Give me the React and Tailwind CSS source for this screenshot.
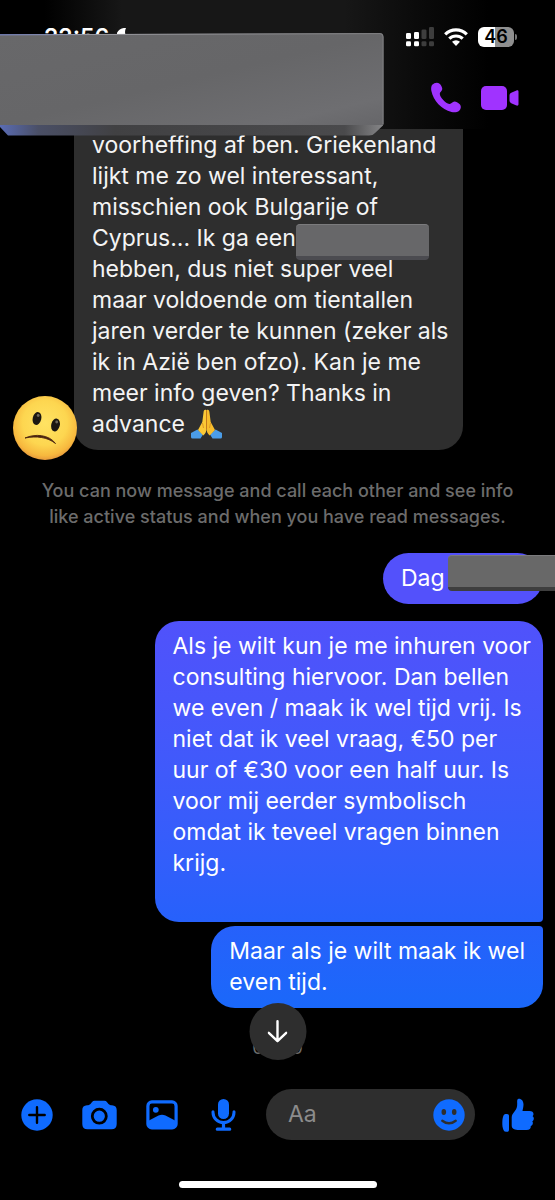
import React from "react";

function HeaderBlock() {
  return (
    <svg viewBox="0 0 384 103" className="pointer-events-none absolute left-0 top-[33px] w-[384px]" aria-hidden="true">
      <defs>
        <linearGradient id="face" x1="0" y1="0" x2="1" y2="1">
          <stop offset="0" stopColor="#68686a" />
          <stop offset="0.5" stopColor="#666668" />
          <stop offset="0.85" stopColor="#6e6e71" />
          <stop offset="1" stopColor="#666669" />
        </linearGradient>
        <linearGradient id="bevel" x1="0" y1="0" x2="1" y2="0">
          <stop offset="0" stopColor="#5a6cb4" />
          <stop offset="0.1" stopColor="#4a4f66" />
          <stop offset="0.3" stopColor="#414143" />
          <stop offset="0.9" stopColor="#4a4a4c" />
          <stop offset="1" stopColor="#858587" />
        </linearGradient>
        <linearGradient id="edge" x1="0" y1="0" x2="1" y2="0">
          <stop offset="0" stopColor="#7f8fd6" />
          <stop offset="0.25" stopColor="#99999f" />
          <stop offset="1" stopColor="#7e7e80" />
        </linearGradient>
      </defs>
      <path d="M0 92H383V92.500L375 100Q373 102.500 369 102.500H8L0 94Z" fill="url(#bevel)" />
      <path d="M0 1.500L380 0Q383.500 0 383.500 4V92H0Z" fill="url(#face)" />
      <path d="M0 1.800L380 0.600Q383 0.600 383 4V91" fill="none" stroke="url(#edge)" />
    </svg>
  );
}

function Signal() {
  return (
    <svg viewBox="0 0 28 20" className="w-[28px]" aria-label="Signal">
      <g fill="#fff">
        <rect x="0" y="6" width="5" height="6" rx="1.300" />
        <rect x="8" y="5" width="5" height="7" rx="1.300" />
        <rect x="0" y="14.300" width="5" height="5" rx="1.300" />
        <rect x="8" y="14.300" width="5" height="5" rx="1.300" />
      </g>
      <g fill="#3d3d3d">
        <rect x="15.500" y="2.500" width="5" height="9.500" rx="1.300" />
        <rect x="23" y="0" width="5" height="12" rx="1.300" />
        <rect x="15.500" y="14.300" width="5" height="5" rx="1.300" />
        <rect x="23" y="14.300" width="5" height="5" rx="1.300" />
      </g>
    </svg>
  );
}

function Wifi() {
  return (
    <svg viewBox="0 0 24 18" className="w-[24px]" aria-label="Wi-Fi">
      <g fill="none" stroke="#fff" strokeWidth="3.200">
        <path d="M1.200 6.300A15.500 15.500 0 0 1 22.800 6.300" />
        <path d="M5.300 10.700A9.700 9.700 0 0 1 18.700 10.700" />
      </g>
      <path d="M12 18L8 13.800A5.800 5.800 0 0 1 16 13.800Z" fill="#fff" />
    </svg>
  );
}

function Battery() {
  return (
    <div className="flex items-center gap-px" aria-label="Battery 46 percent">
      <span className="flex h-5 w-9 items-center justify-center rounded-md bg-linear-to-r from-white from-46% to-[#8f8f8f] to-46% text-lg font-semibold text-black">
        46
      </span>
      <span className="h-1.5 w-0.5 rounded-r bg-[#777777]" />
    </div>
  );
}

function PhoneIcon() {
  return (
    <svg viewBox="0 0 30 31" className="w-[30px]" aria-hidden="true">
      <path
        d="M1.500 2.600C3 .9 6.300-.3 8.600 1.700C10 3 11.300 5.200 11.300 7C11.300 9.200 8.600 9.800 8.800 12C9.100 15.400 14.600 21.500 18.300 22C20.600 22.200 21.200 19.500 23.400 19.500C25.300 19.500 27.800 21.100 29 22.600C30.500 24.600 29.800 27.500 28 29C26.300 30.300 23.500 30.700 20.500 30C10.500 27.500 2.300 18.500.4 9C-.1 6.500.1 4.200 1.500 2.600Z"
        fill="#a033ff"
      />
    </svg>
  );
}

function VideoIcon() {
  return (
    <svg viewBox="0 0 38 24" className="w-[38px]" aria-hidden="true">
      <rect width="26" height="24" rx="5" fill="#a033ff" />
      <path d="M28.500 9.500C28.500 8 29.500 7.200 30.800 6.600L35.500 4.400C36.600 4 37.500 4.500 37.500 5.700V18.300C37.500 19.500 36.600 20 35.500 19.600L30.800 17.400C29.500 16.800 28.500 16 28.500 14.500Z" fill="#a033ff" />
    </svg>
  );
}

function Avatar() {
  return (
    <svg viewBox="0 0 64 64" className="absolute -bottom-2.5 left-[13px] w-[64px]" role="img" aria-label="Confused face">
      <defs>
        <radialGradient id="skin" cx="0.5" cy="0.42" r="0.58">
          <stop offset="0" stopColor="#ffe363" />
          <stop offset="0.6" stopColor="#fdd650" />
          <stop offset="0.88" stopColor="#f7b83e" />
          <stop offset="1" stopColor="#e79a3c" />
        </radialGradient>
      </defs>
      <circle cx="32" cy="32" r="32" fill="url(#skin)" />
      <ellipse cx="24" cy="22.500" rx="4.300" ry="6.500" transform="rotate(14 24 22.500)" fill="#1c1712" />
      <ellipse cx="42.500" cy="29" rx="4.300" ry="6.500" transform="rotate(14 42.500 29)" fill="#1c1712" />
      <circle cx="25.200" cy="19.500" r="1.400" fill="#6d675c" />
      <circle cx="43.700" cy="26" r="1.400" fill="#6d675c" />
      <path d="M12 42C22 37.500 36 38.500 42.500 47.500C34.500 41 23 39.800 12 42Z" fill="#4b2410" stroke="#4b2410" strokeWidth="0.900" strokeLinejoin="round" />
    </svg>
  );
}

function FoldedHands() {
  return (
    <svg viewBox="0 0 31 30" className="-mt-1 inline-block w-[31px] align-middle" role="img" aria-label="Folded hands">
      <path d="M0 24L6.500 20.500L12 25.500L9.500 29.500H1.500Q0 29.500 0 28Z" fill="#4b9de8" />
      <path d="M31 24L24.500 20.500L19 25.500L21.500 29.500H29.500Q31 29.500 31 28Z" fill="#4b9de8" />
      <path d="M15.500 1.200C14 .2 12.800 1 12.600 3L11.300 13L7 21L12.300 26.500C14.500 24.500 15.500 22.500 15.500 19.500Z" fill="#fcc936" />
      <path d="M15.500 1.200C17 .2 18.200 1 18.400 3L19.700 13L24 21L18.700 26.500C16.500 24.500 15.500 22.500 15.500 19.500Z" fill="#f8bd2c" />
      <path d="M15.500 1.500V20" stroke="#c47a1c" strokeWidth="1" />
      <path d="M11.500 14L12.500 19M19.500 14L18.500 19" stroke="#dd9725" strokeWidth="1" fill="none" />
    </svg>
  );
}

function Lines({ items }) {
  return items.map((line, i) => (
    <span key={i} className="block h-[31px] whitespace-nowrap">
      {line}
    </span>
  ));
}

const incoming = [
  "voorheffing af ben. Griekenland",
  "lijkt me zo wel interessant,",
  "misschien ook Bulgarije of",
  <>
    Cyprus... Ik ga een
    <span className="relative">
      <span className="absolute left-0 top-0 h-9 w-[133px] rounded-sm border-t border-b-4 border-t-[#7b7b7d] border-b-[#4b4b50] bg-[#676769]" />
    </span>
  </>,
  "hebben, dus niet super veel",
  "maar voldoende om tientallen",
  "jaren verder te kunnen (zeker als",
  "ik in Azië ben ofzo). Kan je me",
  "meer info geven? Thanks in",
  <>
    advance <FoldedHands />
  </>,
];

const offer = [
  "Als je wilt kun je me inhuren voor",
  "consulting hiervoor. Dan bellen",
  "we even / maak ik wel tijd vrij. Is",
  "niet dat ik veel vraag, €50 per",
  "uur of €30 voor een half uur. Is",
  "voor mij eerder symbolisch",
  "omdat ik teveel vragen binnen",
  "krijg.",
  "",
];

function Header() {
  return (
    <header className="relative z-10 bg-[linear-gradient(to_right,#000_8%,#171717_22%,#171717_62%,#0a0a0a_76%,#000_88%)]">
      <div className="flex h-[74px] items-center justify-between pl-[44px] pr-[38px]">
        <div className="flex items-center gap-2 text-[23px] font-semibold text-white">
          22:56
          <svg viewBox="0 0 16 18" className="w-[16px]" aria-hidden="true">
            <path d="M9 0A9 9 0 1 0 16 13A9 9 0 0 1 9 0Z" fill="#fff" />
          </svg>
        </div>
        <div className="flex items-center gap-2.5">
          <Signal />
          <Wifi />
          <Battery />
        </div>
      </div>
      <nav className="flex h-[55px] items-center justify-end gap-5 pb-2 pr-[36px]">
        <button type="button" aria-label="Audio call">
          <PhoneIcon />
        </button>
        <button type="button" aria-label="Video call">
          <VideoIcon />
        </button>
      </nav>
      <HeaderBlock />
    </header>
  );
}

function Thread() {
  return (
    <main className="flex flex-1 flex-col text-[23px] leading-[31px] text-[#f4f4f4]">
      <div className="relative">
        <p className="ml-[74px] w-[70%] rounded-b-3xl bg-[#2e2e2e] px-[18px] pb-2.5 pt-px">
          <Lines items={incoming} />
        </p>
        <Avatar />
      </div>
      <p className="mt-7 text-center text-lg font-medium leading-[26px] text-[#6c6c6c]">
        You can now message and call each other and see info
        <br />
        like active status and when you have read messages.
      </p>
      <div className="mt-[23px] flex flex-col items-end text-white">
        <div className="relative mr-[12px] flex w-40 justify-between rounded-full bg-[#5351fb] px-[18px] py-2.5">
          <span>Dag</span>
          <span>,</span>
          <span className="absolute -right-3 left-[65px] top-0.5 h-9 rounded-l-sm border-b-4 border-t border-b-[#3e3e3e] border-t-[#7b7b7d] bg-[#686868]" />
        </div>
        <p className="mr-[12px] mt-[17px] w-[70%] rounded-3xl rounded-br-sm bg-linear-to-b from-[#5052fb] to-[#2661fb] px-[18px] pb-3 pt-2.5">
          <Lines items={offer} />
        </p>
        <p className="mr-[12px] mt-1 rounded-3xl rounded-tr-sm bg-linear-to-b from-[#2661fb] to-[#1a68fa] px-[18px] py-2.5">
          <Lines items={["Maar als je wilt maak ik wel", "even tijd."]} />
        </p>
      </div>
      <div className="relative mt-[30px] text-center text-lg leading-5 text-[#6c6c6c]">
        00:00
        <button
          type="button"
          aria-label="Scroll to latest"
          className="absolute -bottom-0.5 left-1/2 flex size-[57px] -translate-x-1/2 items-center justify-center rounded-full bg-[#2e2e2e]"
        >
          <svg viewBox="0 0 20 23" className="w-[20px]" aria-hidden="true">
            <path d="M10 1.300V21M1.300 12.800L10 21.200L18.700 12.800" fill="none" stroke="#fff" strokeWidth="2.400" strokeLinecap="round" strokeLinejoin="round" />
          </svg>
        </button>
      </div>
    </main>
  );
}

function Composer() {
  return (
    <footer className="pb-3">
      <div className="flex items-center gap-[27px] pl-[21px] pr-[21px] text-[#0f6bff]">
        <div className="flex items-center gap-[29px]">
          <button type="button" aria-label="More actions">
            <svg viewBox="0 0 32 32" className="w-[32px]" aria-hidden="true">
              <circle cx="16" cy="16" r="15.700" fill="currentColor" />
              <path d="M16 8.300V23.700M8.300 16H23.700" stroke="#000" strokeWidth="2.400" strokeLinecap="round" />
            </svg>
          </button>
          <button type="button" aria-label="Camera">
            <svg viewBox="0 0 35 30" className="w-[35px]" aria-hidden="true">
              <path
                d="M12.500 .8H22.500C24.500 .8 25 2.500 26.500 4C27.500 5 28.500 5.200 30 5.300C33 5.600 34.700 7 34.700 10V24C34.700 27.500 33 29.200 29.500 29.200H5.500C2 29.200 .3 27.500 .3 24V10C.3 7 2 5.600 5 5.300C6.500 5.200 7.500 5 8.500 4C10 2.500 10.500 .8 12.500 .8Z"
                fill="currentColor"
              />
              <circle cx="17.300" cy="16.200" r="7" fill="none" stroke="#000" strokeWidth="2.800" />
            </svg>
          </button>
          <button type="button" aria-label="Photos">
            <svg viewBox="0 0 32 30" className="w-[32px]" aria-hidden="true">
              <rect x="1.900" y="1.900" width="28.200" height="26" rx="4" fill="none" stroke="currentColor" strokeWidth="3.200" />
              <circle cx="9.800" cy="9.800" r="2.900" fill="currentColor" />
              <path d="M2 21L12.500 15.500Q16 13.800 19.500 15.500L30 21V25Q30 28 27 28H5Q2 28 2 25Z" fill="currentColor" />
            </svg>
          </button>
          <button type="button" aria-label="Voice message">
            <svg viewBox="0 0 32 32" className="w-[32px]" aria-hidden="true">
              <rect x="11" y="0" width="11" height="20" rx="5.500" fill="currentColor" />
              <path d="M6 12.800V13.500A10.500 10 0 0 0 27 13.500V12.800" fill="none" stroke="currentColor" strokeWidth="3" strokeLinecap="round" />
              <path d="M16.500 23.500V30M10.300 30.200H22.700" fill="none" stroke="currentColor" strokeWidth="3.200" strokeLinecap="round" />
            </svg>
          </button>
        </div>
        <div className="flex h-[51px] min-w-0 flex-1 items-center rounded-full bg-[#2e2e2e] pl-[22px] pr-2.5">
          <input
            type="text"
            aria-label="Message"
            placeholder="Aa"
            className="min-w-0 flex-1 bg-transparent text-[23px] text-white outline-none placeholder:text-[#8c8c8c]"
          />
          <button type="button" aria-label="Emoji">
            <svg viewBox="0 0 32 32" className="w-[32px]" aria-hidden="true">
              <circle cx="16" cy="16" r="15.700" fill="currentColor" />
              <ellipse cx="10.800" cy="13" rx="2.300" ry="3" fill="#2e2e2e" />
              <ellipse cx="21.200" cy="13" rx="2.300" ry="3" fill="#2e2e2e" />
              <path d="M9.300 21.700Q16 27 22.700 21.700" fill="none" stroke="#2e2e2e" strokeWidth="2.400" strokeLinecap="round" />
            </svg>
          </button>
        </div>
        <button type="button" aria-label="Like">
          <svg viewBox="0 0 32 34" className="w-[32px]" aria-hidden="true">
            <path
              d="M16.500 .8C19.500 .6 21.500 3 21.500 6.500C21.500 9 20.800 11 20.500 13H27.500C30 13 31.500 14.200 31.500 16C31.500 17 31 17.700 30.600 18.200C31.600 18.800 32 19.800 31.800 21C31.600 22.200 31 22.900 30.200 23.300C30.900 24 31 25 30.700 26C30.400 27.100 29.600 27.700 28.800 28C29 30.500 27.500 32 24.500 32H17C13 32 9.700 31 9.700 27.500V19.500C9.700 17 11 15.500 12.500 13.500C14.500 11 15.300 9 15.200 5.500C15.100 3 15 1 16.500 .8Z"
              fill="currentColor"
            />
            <path d="M3.500 16H5C6.300 16 7 16.800 7 18V31.500C7 33 6.300 33.800 5 33.800H3.800C1.500 33.800 .3 30 .3 25C.3 20 1.300 16 3.500 16Z" fill="currentColor" />
          </svg>
        </button>
      </div>
      <div className="mx-auto mt-[41px] h-[7px] w-[198px] rounded-full bg-white" />
    </footer>
  );
}

export default function App() {
  return (
    <div className="flex min-h-screen flex-col overflow-x-hidden bg-black font-['Inter','Liberation_Sans',sans-serif]">
      <Header />
      <Thread />
      <Composer />
    </div>
  );
}
